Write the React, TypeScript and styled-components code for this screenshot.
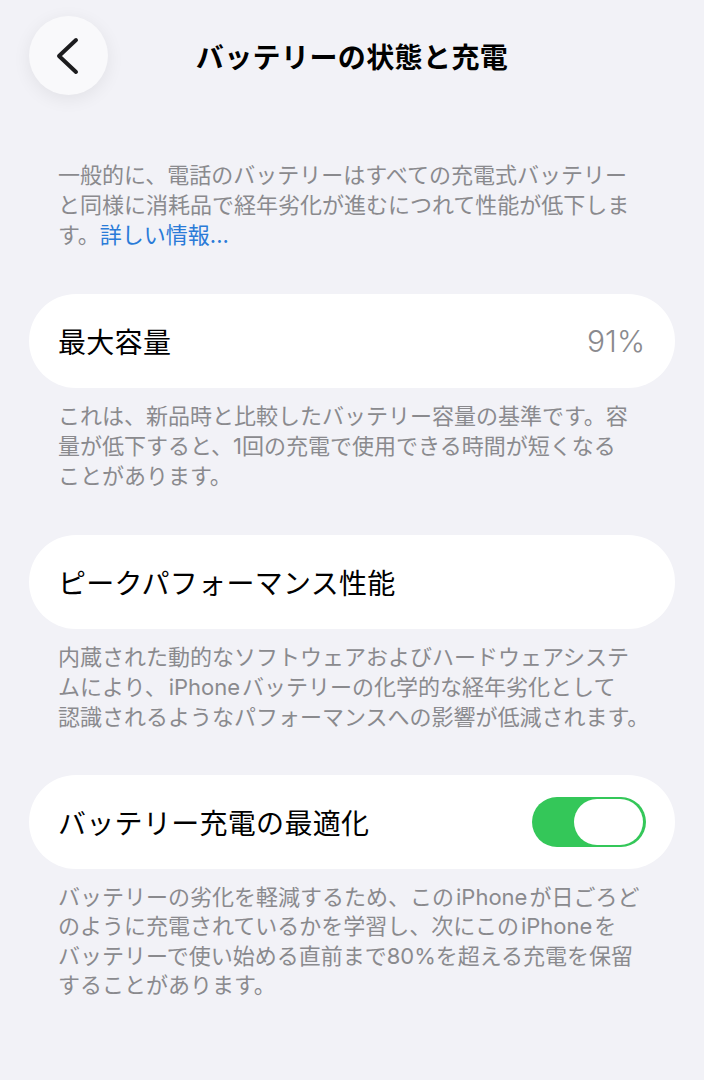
import React from "react";
import styled, { createGlobalStyle } from "styled-components";

const GlobalStyle = createGlobalStyle`
  html, body {
    margin: 0;
    padding: 0;
    background: #f2f2f7;
  }
  body {
    font-family: Inter, "Noto Sans CJK JP", sans-serif;
    -webkit-font-smoothing: antialiased;
  }
`;

const Page = styled.div`
  width: 704px;
  min-height: 1080px;
  box-sizing: border-box;
  padding: 16px 29px 0;
  background: #f2f2f7;
`;

const Header = styled.header`
  display: grid;
  grid-template-columns: 79px 1fr 79px;
  align-items: center;
  height: 79px;
`;

const BackButton = styled.button`
  width: 79px;
  height: 79px;
  border: none;
  border-radius: 50%;
  background: #f9f9fb;
  box-shadow: 0 4px 18px rgba(0, 0, 0, 0.07);
  display: flex;
  align-items: center;
  justify-content: center;
  padding: 0;
  cursor: pointer;
`;

const Title = styled.h1`
  margin: 0;
  text-align: center;
  font-family: "Noto Sans CJK JP", sans-serif;
  font-size: 28px;
  font-weight: 700;
  color: #000;
  letter-spacing: 0.4px;
`;

const Section = styled.section<{ $gap: number }>`
  margin-top: ${(p) => p.$gap}px;
`;

const Card = styled.div`
  height: 94px;
  box-sizing: border-box;
  border-radius: 47px;
  background: #fff;
  padding: 0 29px;
  display: flex;
  align-items: center;
  justify-content: space-between;
`;

const Label = styled.span`
  font-family: "Noto Sans CJK JP", sans-serif;
  font-size: 28px;
  color: #000;
  letter-spacing: 0.3px;
`;

const Value = styled.span`
  font-family: Inter, sans-serif;
  font-size: 30px;
  font-weight: 300;
  color: #8a8a8e;
  margin-right: 1px;
`;

const Note = styled.p<{ $top: number; $lh?: number }>`
  margin: ${(p) => p.$top}px 0 0;
  padding: 0 29px;
  font-size: 22px;
  line-height: ${(p) => p.$lh ?? 30}px;
  color: #8a8a8e;
`;

const Line = styled.span`
  display: block;
  white-space: nowrap;
`;

const Latin = styled.span`
  margin: 0 2px;
`;

const Link = styled.a`
  color: #2a7bd8;
  text-decoration: none;
`;

const Toggle = styled.div<{ $on: boolean }>`
  width: 114px;
  height: 50px;
  box-sizing: border-box;
  border-radius: 25px;
  padding: 2px 3px;
  background: ${(p) => (p.$on ? "#34c759" : "#e9e9eb")};
  display: flex;
  justify-content: ${(p) => (p.$on ? "flex-end" : "flex-start")};
`;

const Knob = styled.span`
  width: 69px;
  height: 46px;
  border-radius: 23px;
  background: #fff;
`;

const Chevron = () => (
  <svg width="40" height="40" viewBox="0 0 40 40">
    <path
      d="M27 6 L10 22 L27 38"
      fill="none"
      stroke="#1c1c1e"
      strokeWidth="4"
      strokeLinecap="round"
      strokeLinejoin="round"
      transform="translate(0 -2)"
    />
  </svg>
);

// splits out "iPhone" so it gets the small gap iOS puts around Latin words
const renderLine = (text: string) =>
  text.split(/(iPhone)/).map((part, i) =>
    part === "iPhone" ? <Latin key={i}>{part}</Latin> : part
  );

const notes = {
  capacity: [
    "これは、新品時と比較したバッテリー容量の基準です。容",
    "量が低下すると、1回の充電で使用できる時間が短くなる",
    "ことがあります。",
  ],
  peak: [
    "内蔵された動的なソフトウェアおよびハードウェアシステ",
    "ムにより、iPhoneバッテリーの化学的な経年劣化として",
    "認識されるようなパフォーマンスへの影響が低減されます。",
  ],
  optimize: [
    "バッテリーの劣化を軽減するため、このiPhoneが日ごろど",
    "のように充電されているかを学習し、次にこのiPhoneを",
    "バッテリーで使い始める直前まで80%を超える充電を保留",
    "することがあります。",
  ],
};

export default function App() {
  return (
    <>
      <GlobalStyle />
      <Page>
        <Header>
          <BackButton aria-label="戻る">
            <Chevron />
          </BackButton>
          <Title>バッテリーの状態と充電</Title>
          <span />
        </Header>

        <Note $top={65}>
          <Line>一般的に、電話のバッテリーはすべての充電式バッテリー</Line>
          <Line>と同様に消耗品で経年劣化が進むにつれて性能が低下しま</Line>
          <Line>
            す。<Link href="#">詳しい情報...</Link>
          </Line>
        </Note>

        <Section $gap={44}>
          <Card>
            <Label>最大容量</Label>
            <Value>91%</Value>
          </Card>
          <Note $top={13}>
            {notes.capacity.map((l) => (
              <Line key={l}>{renderLine(l)}</Line>
            ))}
          </Note>
        </Section>

        <Section $gap={44}>
          <Card>
            <Label>ピークパフォーマンス性能</Label>
          </Card>
          <Note $top={13}>
            {notes.peak.map((l) => (
              <Line key={l}>{renderLine(l)}</Line>
            ))}
          </Note>
        </Section>

        <Section $gap={43}>
          <Card>
            <Label>バッテリー充電の最適化</Label>
            <Toggle $on>
              <Knob />
            </Toggle>
          </Card>
          <Note $top={14} $lh={29.4}>
            {notes.optimize.map((l) => (
              <Line key={l}>{renderLine(l)}</Line>
            ))}
          </Note>
        </Section>
      </Page>
    </>
  );
}
